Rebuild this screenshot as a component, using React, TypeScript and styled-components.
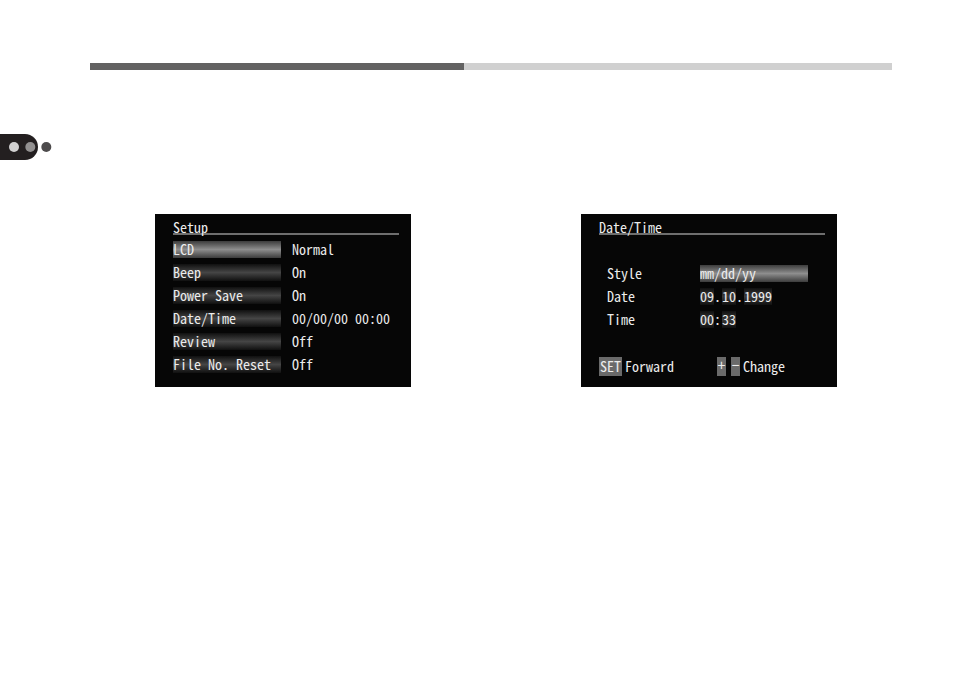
import React from 'react';
import styled, { createGlobalStyle, ThemeProvider } from 'styled-components';

interface SetupItem {
    name: string;
    value: string;
}

const theme = {
    colors: {
        screenBg: '#060606',
        screenText: '#ececec',
        screenRule: '#6e6e6e',
        dividerDark: '#636262',
        dividerLight: '#d0d0d0',
        keyBg: '#6a6a6a',
    },
};

const setupItems: SetupItem[] = [
    { name: 'LCD', value: 'Normal' },
    { name: 'Beep', value: 'On' },
    { name: 'Power Save', value: 'On' },
    { name: 'Date/Time', value: '00/00/00 00:00' },
    { name: 'Review', value: 'Off' },
    { name: 'File No. Reset', value: 'Off' },
];

const SetupScreen: React.FC = () => (
    <Screen aria-label="Setup">
        <Title>Setup</Title>
        <SetupList>
            {setupItems.map(({ name, value }, index) => (
                <SetupRow key={name}>
                    <ItemButton type="button" $active={index === 0}>
                        {name}
                    </ItemButton>
                    <span>{value}</span>
                </SetupRow>
            ))}
        </SetupList>
    </Screen>
);

const DateTimeScreen: React.FC = () => (
    <Screen aria-label="Date/Time">
        <Title>Date/Time</Title>
        <Fields>
            <Field>
                <label htmlFor="style">Style</label>
                <StyleSelect id="style" defaultValue="mm/dd/yy">
                    <option>mm/dd/yy</option>
                    <option>dd/mm/yy</option>
                    <option>yy/mm/dd</option>
                </StyleSelect>
            </Field>
            <Field>
                <label htmlFor="month">Date</label>
                <Digits>
                    <DigitInput id="month" defaultValue="09" $chars={2} />
                    <Separator>.</Separator>
                    <DigitInput aria-label="Day" defaultValue="10" $chars={2} />
                    <Separator>.</Separator>
                    <DigitInput aria-label="Year" defaultValue="1999" $chars={4} />
                </Digits>
            </Field>
            <Field>
                <label htmlFor="hour">Time</label>
                <Digits>
                    <DigitInput id="hour" defaultValue="00" $chars={2} />
                    <Separator>:</Separator>
                    <DigitInput aria-label="Minute" defaultValue="33" $chars={2} />
                </Digits>
            </Field>
        </Fields>
        <Keys>
            <KeyGroup $gap={3}>
                <Key type="button">SET</Key>
                <span>Forward</span>
            </KeyGroup>
            <KeyGroup $gap={3}>
                <KeyGroup $gap={5}>
                    <SymbolKey type="button">+</SymbolKey>
                    <SymbolKey type="button">−</SymbolKey>
                </KeyGroup>
                <span>Change</span>
            </KeyGroup>
        </Keys>
    </Screen>
);

const App: React.FC = () => (
    <ThemeProvider theme={theme}>
        <GlobalStyle />
        <Page>
            <Divider />
            <SectionTab width="52" height="26" viewBox="0 0 52 26" aria-hidden="true">
                <path d="M0 0H25A13 13 0 0 1 25 26H0Z" fill="#231f20" />
                <circle cx="14" cy="13" r="5" fill="#d2d1d1" />
                <circle cx="30.3" cy="13" r="5" fill="#929090" />
                <circle cx="46.3" cy="13" r="5" fill="#4d4b4c" />
            </SectionTab>
            <Screens>
                <SetupScreen />
                <DateTimeScreen />
            </Screens>
        </Page>
    </ThemeProvider>
);

const GlobalStyle = createGlobalStyle`
    body {
        margin: 0;
        background-color: #fff;
    }

    *, *::before, *::after {
        box-sizing: border-box;
    }

    button, input, select {
        margin: 0;
        padding: 0;
        border: 0;
        border-radius: 0;
        color: inherit;
        font: inherit;
        font-feature-settings: inherit;
    }
`;

const Page = styled.main`
    display: flex;
    flex-flow: column;
    padding: 63px 62px 63px 0;
`;

const Divider = styled.div`
    display: grid;
    grid-template-columns: 7fr 8fr;
    height: 7px;
    margin-left: 90px;

    &::before,
    &::after {
        content: '';
        background-color: ${({ theme }): string => theme.colors.dividerDark};
    }

    &::after {
        background-color: ${({ theme }): string => theme.colors.dividerLight};
    }
`;

const SectionTab = styled.svg`
    margin-top: 64px;
`;

const Screens = styled.div`
    display: flex;
    flex-flow: row wrap;
    justify-content: space-between;
    gap: 24px;
    margin-top: 54px;
    padding: 0 55px 0 155px;
`;

const Screen = styled.section`
    display: flex;
    flex-flow: column;
    width: 256px;
    padding: 5px 12px 11px 18px;
    background-color: ${({ theme }): string => theme.colors.screenBg};
    color: ${({ theme }): string => theme.colors.screenText};
    font-family: 'Noto Sans CJK JP', 'Liberation Mono', monospace;
    font-size: 14px;
    font-feature-settings: 'hwid', 'liga' 0;
    line-height: 17px;
    white-space: pre;
`;

const Title = styled.h2`
    height: 16px;
    margin: 0;
    border-bottom: 2px solid ${({ theme }): string => theme.colors.screenRule};
    font-size: 14px;
    font-weight: 400;
`;

const SetupList = styled.ul`
    display: flex;
    flex-flow: column;
    gap: 6px;
    margin: 6px 0 2px;
    padding: 0;
    list-style: none;
`;

const SetupRow = styled.li`
    display: grid;
    grid-template-columns: 108px 1fr;
    column-gap: 11px;
`;

const ItemButton = styled.button<{ $active: boolean }>`
    height: 17px;
    background: ${({ $active }): string =>
        $active
            ? 'linear-gradient(#3c3c3c, #8e8e8e 50%, #3c3c3c)'
            : 'linear-gradient(#101010, #454545 50%, #101010)'};
    text-align: left;
`;

const Fields = styled.div`
    display: flex;
    flex-flow: column;
    gap: 6px;
    margin-top: 30px;
    padding-left: 8px;
`;

const Field = styled.div`
    display: grid;
    grid-template-columns: 93px 108px;
    height: 17px;
`;

const StyleSelect = styled.select`
    appearance: none;
    height: 17px;
    background: linear-gradient(#3c3c3c, #8e8e8e 50%, #3c3c3c);
`;

const Digits = styled.div`
    display: flex;
`;

const DigitInput = styled.input<{ $chars: number }>`
    width: ${({ $chars }): number => $chars * 7}px;
    height: 17px;
    background: linear-gradient(#101010, #3c3c3c 50%, #101010);
`;

const Separator = styled.span`
    width: 8px;
`;

const Keys = styled.div`
    display: flex;
    gap: 43px;
    margin-top: 29px;
    line-height: 19px;
`;

const KeyGroup = styled.div<{ $gap: number }>`
    display: flex;
    gap: ${({ $gap }): number => $gap}px;
`;

const Key = styled.button`
    display: flex;
    align-items: center;
    justify-content: center;
    width: 23px;
    height: 19px;
    background-color: ${({ theme }): string => theme.colors.keyBg};
`;

const SymbolKey = styled(Key)`
    width: 9px;
    font-family: 'Liberation Mono', monospace;
`;

export default App;
